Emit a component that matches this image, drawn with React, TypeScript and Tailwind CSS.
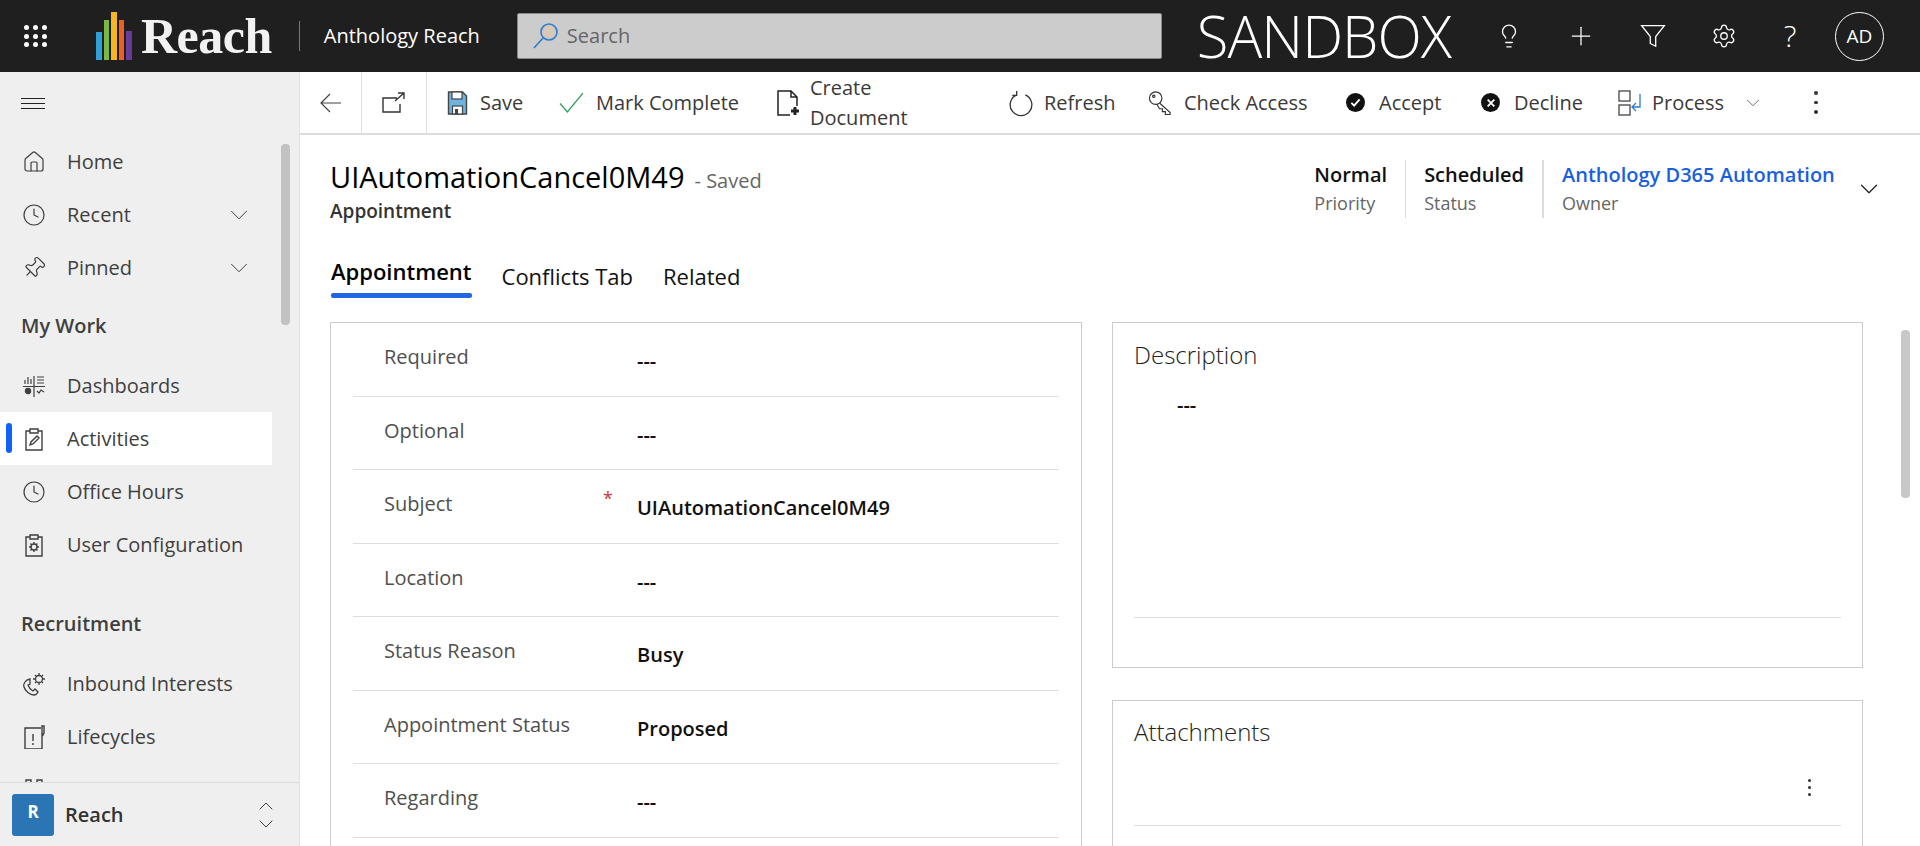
import React from 'react'
import { ChevronDown, ChevronUp, Clock, House, Lightbulb, Pin, Plus, Settings } from 'lucide-react'

const font = { fontFamily: '"Open Sans", "Noto Sans", sans-serif' }

function Logo() {
  const bars = [
    { c: 'bg-[#2f9fd8]', h: 'h-[28px]' },
    { c: 'bg-[#7cb944]', h: 'h-[40px]' },
    { c: 'bg-[#f4b622]', h: 'h-[48px]' },
    { c: 'bg-[#ee5f26]', h: 'h-[40px]' },
    { c: 'bg-[#6a3b98]', h: 'h-[29px]' },
  ]
  return (
    <div className="flex items-end gap-[2px] h-[48px] w-[36px]">
      {bars.map((b, i) => (
        <div key={i} className={`w-[5.6px] ${b.c} ${b.h}`} />
      ))}
    </div>
  )
}

function Dots3x3() {
  return (
    <div className="grid grid-cols-3 gap-[3.5px] w-[23px]">
      {Array.from({ length: 9 }).map((_, i) => (
        <div key={i} className="w-[5px] h-[5px] rounded-full bg-white" />
      ))}
    </div>
  )
}

const Line = (p: React.SVGProps<SVGSVGElement>) => (
  <svg viewBox="0 0 24 24" fill="none" stroke="currentColor" strokeWidth={1.2} {...p} />
)

function Funnel() {
  return (
    <Line className="w-[26px] h-[26px] text-white">
      <path d="M1.5 2.5h21l-8 10v9l-5-2.6v-6.4z" />
    </Line>
  )
}

function CommandBar() {
  return (
    <div className="flex items-center h-[63px] border-b-2 border-[#dcdcdc] text-[20px] text-[#3b3a39] shrink-0">
      <div className="flex items-center justify-center w-[62px] h-[61px] border-r border-[#e1e1e1]">
        <Line className="w-[24px] h-[24px] text-[#444]"><path d="M22 12H2M11 3l-9 9 9 9" /></Line>
      </div>
      <div className="flex items-center justify-center w-[65px] h-[61px] border-r border-[#e1e1e1]">
        <Line className="w-[24px] h-[24px] text-[#333]" strokeWidth={1.4}><path d="M15 7H1v14h17v-8M13 10l9-8M16 2h6v6" /></Line>
      </div>
      <div className="flex items-center ml-[20px]">
        <svg viewBox="0 0 20 24" className="w-[21px] h-[24px]">
          <path d="M1 1h14l4 4v18H1z" fill="#6fb3e0" stroke="#444" strokeWidth="1.4" />
          <rect x="4.5" y="1" width="10" height="7" fill="#fff" stroke="#444" strokeWidth="1.2" />
          <rect x="5" y="15" width="10" height="8" fill="#fff" stroke="#444" strokeWidth="1.2" />
          <rect x="7.5" y="18" width="3" height="5" fill="#444" />
        </svg>
        <span className="ml-[12px] w-[44px]">Save</span>
      </div>
      <div className="flex items-center ml-[35px]">
        <Line className="w-[25px] h-[25px] text-[#2f9e5f]" strokeWidth={1.3}><path d="M1 13l7 8L23 3" /></Line>
        <span className="ml-[12px] w-[143px]">Mark Complete</span>
      </div>
      <div className="flex items-center ml-[37px]">
        <svg viewBox="0 0 24 28" className="w-[24px] h-[28px]" fill="none" stroke="#222" strokeWidth="1.5">
          <path d="M14 26H2V2h13l6 6v9M15 2v6h6" />
          <path d="M19 18v8M15 22h8" strokeWidth="3" />
        </svg>
        <span className="ml-[10px] w-[163px]">Create Document</span>
      </div>
      <div className="flex items-center ml-[35px]">
        <Line className="w-[26px] h-[28px] text-[#333]"><path d="M8 4.5a10 10 0 1 0 8 0M8 1v4H4" /></Line>
        <span className="ml-[10px] w-[69px]">Refresh</span>
      </div>
      <div className="flex items-center ml-[35px]">
        <svg viewBox="0 0 26 26" className="w-[25px] h-[26px]" fill="none" stroke="#333" strokeWidth="1.2">
          <circle cx="8" cy="8" r="6.5" />
          <circle cx="6" cy="6" r="1.2" />
          <path d="M12 13l11 10v2h-5v-3h-3v-3h-3l-3-5" />
        </svg>
        <span className="ml-[11px] w-[125px]">Check Access</span>
      </div>
      <div className="flex items-center ml-[37px]">
        <div className="flex items-center justify-center w-[19px] h-[19px] rounded-full bg-[#111]">
          <svg viewBox="0 0 12 12" className="w-[11px] h-[11px]" fill="none" stroke="#fff" strokeWidth="2"><path d="M1.5 6.5l3 3 6-7" /></svg>
        </div>
        <span className="ml-[14px] w-[64px]">Accept</span>
      </div>
      <div className="flex items-center ml-[38px]">
        <div className="flex items-center justify-center w-[19px] h-[19px] rounded-full bg-[#111]">
          <svg viewBox="0 0 12 12" className="w-[10px] h-[10px]" fill="none" stroke="#fff" strokeWidth="2.2"><path d="M2 2l8 8M10 2l-8 8" /></svg>
        </div>
        <span className="ml-[14px] w-[68px]">Decline</span>
      </div>
      <div className="flex items-center ml-[36px]">
        <svg viewBox="0 0 24 26" className="w-[24px] h-[26px]" fill="none" stroke="#444" strokeWidth="1.3">
          <rect x="1" y="1" width="11" height="10" />
          <rect x="1" y="15" width="11" height="10" />
          <path d="M22 4v13h-7M18 13l-4 4 4 4" stroke="#2b7cd3" />
        </svg>
        <span className="ml-[10px] w-[70px]">Process</span>
      </div>
      <ChevronDown className="ml-[20px] w-[22px] h-[22px] text-[#666]" strokeWidth={1} />
      <div className="ml-[50px] flex flex-col gap-[6px]">
        <div className="w-[3.5px] h-[3.5px] rounded-full bg-[#333]" />
        <div className="w-[3.5px] h-[3.5px] rounded-full bg-[#333]" />
        <div className="w-[3.5px] h-[3.5px] rounded-full bg-[#333]" />
      </div>
    </div>
  )
}

type NavItem = { label: string; icon: React.ReactNode; chevron?: boolean; active?: boolean }

const iconCls = 'w-[24px] h-[24px]'

const topNav: NavItem[] = [
  { label: 'Home', icon: <House className={iconCls} strokeWidth={1.2} /> },
  { label: 'Recent', icon: <Clock className={iconCls} strokeWidth={1.2} />, chevron: true },
  { label: 'Pinned', icon: <Pin className={`${iconCls} rotate-45`} strokeWidth={1.2} />, chevron: true },
]

const workNav: NavItem[] = [
  {
    label: 'Dashboards',
    icon: (
      <Line className={iconCls}>
        <path d="M1 12.5h22M12 2v21M3 10V6M6 10V3M9 10V5M15 3h7M15 6h7M15 9h7M15 17l2 2 2-3 3 2" />
        <circle cx="6" cy="17" r="2.6" fill="currentColor" />
      </Line>
    ),
  },
  {
    label: 'Activities',
    active: true,
    icon: (
      <Line className={iconCls} strokeWidth={1.4}>
        <path d="M8 4H4v19h16V4h-4M8 2h8v4H8zM8 18l1-3 6-6 2 2-6 6z" />
      </Line>
    ),
  },
  { label: 'Office Hours', icon: <Clock className={iconCls} strokeWidth={1.2} /> },
  {
    label: 'User Configuration',
    icon: (
      <Line className={iconCls} strokeWidth={1.4}>
        <path d="M8 4H4v19h16V4h-4M8 2h8v4H8z" />
        <circle cx="12" cy="14" r="3" />
        <path d="M12 9v2M12 17v2M7 14h2M15 14h2M8.5 10.5l1.4 1.4M14 16l1.4 1.4M8.5 17.5l1.4-1.4M14 12l1.4-1.4" />
      </Line>
    ),
  },
]

const recruitNav: NavItem[] = [
  {
    label: 'Inbound Interests',
    icon: (
      <Line className={iconCls} strokeWidth={1.3}>
        <path d="M8 7C3 8 1 12 2 15c1 4 6 8 10 8 2 0 3-1 4-3l-3-3-2 2c-2-1-4-3-5-6l2-1z" />
        <circle cx="17" cy="7" r="3.5" />
        <path d="M17 1v2M17 11v2M11 7h2M21 7h2M13 3l1.4 1.4M19.6 9.6L21 11M13 11l1.4-1.4M19.6 4.4L21 3" />
      </Line>
    ),
  },
  {
    label: 'Lifecycles',
    icon: (
      <Line className={iconCls} strokeWidth={1.4}>
        <path d="M19 3H3v21h17V3M20 1h2v7l-1 2-1-2zM11 9v7M11 18v2" />
      </Line>
    ),
  },
  {
    label: 'Enrollment',
    icon: (
      <Line className={iconCls} strokeWidth={1.4}>
        <path d="M4 8V2h5v3h6V2h5v6l3 5H1zM4 13v10h16V13" />
      </Line>
    ),
  },
]

function NavRow({ item }: { item: NavItem }) {
  return (
    <div className={`relative flex items-center h-[53px] w-[272px] ${item.active ? 'bg-white' : ''}`}>
      {item.active && <div className="absolute left-[6px] top-[11px] w-[6px] h-[30px] rounded-[3px] bg-[#0f62f5]" />}
      <div className="flex items-center justify-center w-[67px] pl-[1px]">{item.icon}</div>
      <span>{item.label}</span>
      {item.chevron && <ChevronDown className="absolute left-[224px] w-[30px] h-[30px]" strokeWidth={0.8} />}
    </div>
  )
}

function Sidebar() {
  return (
    <aside className="relative flex flex-col w-[300px] shrink-0 bg-[#efefef] border-r border-[#e2e2e2] text-[20px] text-[#3f3f3f]">
      <div className="flex-1 overflow-hidden">
        <div className="flex items-center h-[63px] pl-[21px]">
          <div className="flex flex-col gap-[4px] w-[24px]">
            <div className="h-[1px] bg-[#222]" />
            <div className="h-[1px] bg-[#222]" />
            <div className="h-[1px] bg-[#222]" />
          </div>
        </div>
        <div className="pt-[0px]">
          {topNav.map(i => <NavRow key={i.label} item={i} />)}
        </div>
        <div className="pl-[21px] pt-[18px] h-[63px] font-semibold text-[20px] leading-[28px]">My Work</div>
        <div className="pt-[2px]">
          {workNav.map(i => <NavRow key={i.label} item={i} />)}
        </div>
        <div className="pl-[21px] pt-[39px] h-[86px] font-semibold text-[20px] leading-[28px]">Recruitment</div>
        <div className="pt-[0px]">
          {recruitNav.map(i => <NavRow key={i.label} item={i} />)}
        </div>
      </div>
      <div className="flex items-center h-[64px] shrink-0 bg-[#efefef] border-t border-[#dcdcdc] pl-[12px] relative">
        <div className="flex items-center justify-center w-[42px] h-[42px] rounded-[3px] bg-[#2b75b5] text-white font-bold text-[17px] pb-[6px]">R</div>
        <span className="ml-[11px] font-semibold text-[#333]">Reach</span>
        <div className="absolute left-[254px] flex flex-col items-center -space-y-[6px]">
          <ChevronUp className="w-[24px] h-[24px]" strokeWidth={1} />
          <ChevronDown className="w-[24px] h-[24px]" strokeWidth={1} />
        </div>
      </div>
      <div className="absolute left-[281px] top-[72px] w-[9px] h-[181px] rounded-[4px] bg-[#c2c2c2]" />
    </aside>
  )
}

const rows = [
  { label: 'Required', value: '---' },
  { label: 'Optional', value: '---' },
  { label: 'Subject', value: 'UIAutomationCancel0M49', required: true },
  { label: 'Location', value: '---' },
  { label: 'Status Reason', value: 'Busy' },
  { label: 'Appointment Status', value: 'Proposed' },
  { label: 'Regarding', value: '---' },
]

function FormCard() {
  return (
    <div className="w-[752px] h-[600px] border border-[#cccccc] px-[22px] shrink-0">
      {rows.map(r => (
        <div key={r.label} className="relative flex h-[73.5px] border-b border-[#dedede] text-[20px]">
          <div className="w-[284px] pl-[31px] pt-[19px] leading-[30px] text-[#505050]">{r.label}</div>
          {r.required && <span className="absolute left-[250px] top-[15px] text-[#d13438] text-[18px]">*</span>}
          <div className="pt-[23px] leading-[30px] font-semibold text-[#111]">{r.value}</div>
        </div>
      ))}
    </div>
  )
}

function Header() {
  return (
    <div className="flex justify-between h-[108px] pl-[30px] pr-[36px] pt-[21px] shrink-0">
      <div>
        <div className="flex items-baseline">
          <span className="text-[29px] leading-[42px] font-medium text-black">UIAutomationCancel0M49</span>
          <span className="ml-[10px] text-[20px] text-[#666]">- Saved</span>
        </div>
        <div className="text-[19px] leading-[26px] font-semibold text-[#333]">Appointment</div>
      </div>
      <div className="flex items-center h-[60px] mt-[3px]">
        <div className="pr-[18px] border-r border-[#dcdcdc] h-[58px]">
          <div className="text-[20px] leading-[30px] font-semibold text-[#111]">Normal</div>
          <div className="text-[18px] leading-[26px] text-[#666]">Priority</div>
        </div>
        <div className="px-[18px] border-r-2 border-[#dcdcdc] h-[58px]">
          <div className="text-[20px] leading-[30px] font-semibold text-[#111]">Scheduled</div>
          <div className="text-[18px] leading-[26px] text-[#666]">Status</div>
        </div>
        <div className="pl-[18px] w-[310px] h-[58px]">
          <div className="text-[20px] leading-[30px] font-semibold text-[#1a5fe0]">Anthology D365 Automation</div>
          <div className="text-[18px] leading-[26px] text-[#666]">Owner</div>
        </div>
        <ChevronDown className="w-[30px] h-[30px] text-[#222]" strokeWidth={1} />
      </div>
    </div>
  )
}

function Tabs() {
  return (
    <div className="flex pl-[31px] gap-[30px] h-[79px] text-[22px] shrink-0">
      <div className="h-[55px] flex flex-col justify-end relative">
        <div className="leading-[34px] pb-[5px] font-semibold text-black">Appointment</div>
        <div className="h-[5px] rounded-[2px] bg-[#2266e3]" />
      </div>
      <div className="h-[55px] leading-[34px] pt-[16px] text-[#111]">Conflicts Tab</div>
      <div className="h-[55px] leading-[34px] pt-[16px] text-[#111]">Related</div>
    </div>
  )
}

function SideCards() {
  return (
    <div className="flex flex-col gap-[32px] w-[751px] shrink-0 ml-[30px]">
      <div className="h-[346px] border border-[#cccccc] px-[21px] pt-[15px] shrink-0">
        <div className="text-[24px] leading-[34px] font-light text-[#222]">Description</div>
        <div className="pl-[43px] pt-[18px] text-[20px] leading-[30px] font-semibold text-[#111] h-[246px] border-b border-[#dedede]">---</div>
      </div>
      <div className="h-[300px] border border-[#cccccc] px-[21px] pt-[14px] shrink-0">
        <div className="text-[24px] leading-[34px] font-light text-[#222]">Attachments</div>
        <div className="flex items-center justify-end h-[77px] border-b border-[#dedede] pr-[30px]">
          <div className="flex flex-col gap-[4px]">
            <div className="w-[3px] h-[3px] rounded-full bg-[#333]" />
            <div className="w-[3px] h-[3px] rounded-full bg-[#333]" />
            <div className="w-[3px] h-[3px] rounded-full bg-[#333]" />
          </div>
        </div>
      </div>
    </div>
  )
}

export default function App() {
  return (
    <div className="flex flex-col h-[846px] w-[1920px] overflow-hidden bg-white" style={font}>
      <header className="flex items-center h-[72px] bg-[#1f1f1f] text-white shrink-0">
        <div className="ml-[24px]"><Dots3x3 /></div>
        <div className="ml-[49px]"><Logo /></div>
        <span className="ml-[9px] text-[50px] leading-[50px] font-bold text-[#f2f2f2] tracking-[-0.5px]" style={{ fontFamily: '"Liberation Serif", serif' }}>Reach</span>
        <div className="ml-[27px] w-[1px] h-[30px] bg-[#777]" />
        <span className="ml-[24px] text-[20px] whitespace-nowrap">Anthology Reach</span>
        <div className="flex items-center ml-[37px] w-[645px] h-[46px] rounded-[2px] bg-[#cccccc] border border-[#888] pl-[15px]">
          <svg viewBox="0 0 26 28" className="w-[26px] h-[28px]" fill="none">
            <circle cx="16" cy="10" r="8" fill="#d8c8b8" stroke="#2b7cd3" strokeWidth="1.6" />
            <path d="M10 16L1 26" stroke="#2b7cd3" strokeWidth="1.6" />
          </svg>
          <span className="ml-[8px] text-[20px] text-[#666]">Search</span>
        </div>
        <span className="ml-[35px] text-[58px] leading-[60px] font-light whitespace-nowrap tracking-[-1px]">SANDBOX</span>
        <div className="ml-[45px] w-[26px] flex justify-center"><Lightbulb className="w-[26px] h-[28px]" strokeWidth={1.2} /></div>
        <div className="ml-[44px] w-[30px] flex justify-center"><Plus className="w-[32px] h-[32px]" strokeWidth={1} /></div>
        <div className="ml-[42px] w-[30px] flex justify-center"><Funnel /></div>
        <div className="ml-[42px] w-[28px] flex justify-center"><Settings className="w-[26px] h-[26px]" strokeWidth={1.2} /></div>
        <span className="ml-[42px] w-[20px] text-center text-[30px] font-light leading-[36px]">?</span>
        <div className="ml-[35px] flex items-center justify-center w-[49px] h-[49px] rounded-full border border-white text-[19px]">AD</div>
      </header>
      <div className="flex flex-1 min-h-0">
        <Sidebar />
        <main className="relative flex flex-col flex-1 min-w-0 overflow-hidden">
          <CommandBar />
          <Header />
          <Tabs />
          <div className="flex items-start pl-[30px]">
            <FormCard />
            <SideCards />
          </div>
          <div className="absolute left-[1601px] top-[258px] w-[9px] h-[168px] rounded-[4px] bg-[#c8c8c8]" />
        </main>
      </div>
    </div>
  )
}
